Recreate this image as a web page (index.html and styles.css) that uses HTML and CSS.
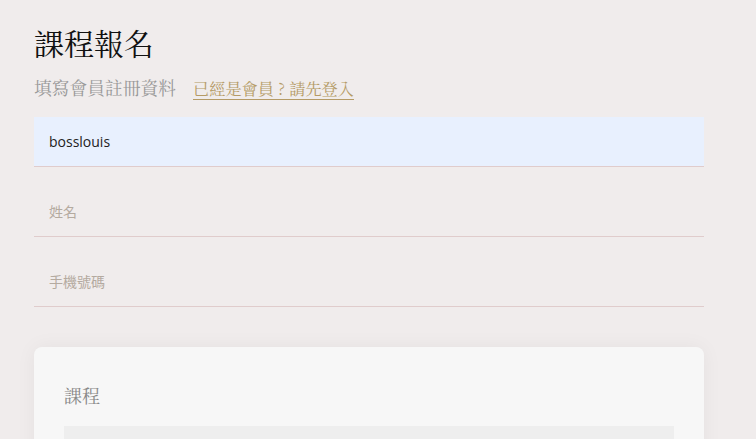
FILE: index.html
```html
<!DOCTYPE html>
<html lang="zh-Hant">
<head>
  <meta charset="UTF-8" />
  <meta name="viewport" content="width=device-width, initial-scale=1" />
  <title>課程報名</title>
  <link rel="stylesheet" href="styles.css">
</head>
<body>

  <main class="signup">
    <h1 class="signup-title">課程報名</h1>
    <p class="signup-sub">
      <span>填寫會員註冊資料</span>
      <a href="#" class="login-link">已經是會員 ? 請先登入</a>
    </p>

    <form class="signup-form">
      <input class="field field-filled" type="text" value="bosslouis">
      <input class="field" type="text" placeholder="姓名">
      <input class="field" type="tel" placeholder="手機號碼">

      <section class="course-card">
        <h2 class="course-label">課程</h2>
        <div class="course-select"></div>
      </section>
    </form>
  </main>

</body>
</html>
```

FILE: styles.css
```css
body {
  margin: 0;
  background: #f0ecec;
  font-family: "Open Sans", "Noto Sans CJK TC", sans-serif;
  color: #333;
}

.signup {
  width: 670px;
  padding: 0 34px;
}

.signup-title {
  margin: 0;
  padding-top: 22px;
  font-family: "Noto Serif CJK TC", "Noto Sans CJK TC", serif;
  font-weight: 400;
  font-size: 30px;
  line-height: 40px;
  color: #111;
}

.signup-sub {
  margin: 12px 0 0;
  display: flex;
  align-items: baseline;
  gap: 17px;
  font-family: "Noto Serif CJK TC", "Noto Sans CJK TC", serif;
  font-size: 17.75px;
  line-height: 28px;
  color: #999;
}

.login-link {
  font-size: 16.2px;
  color: #b59b66;
  text-decoration: underline;
  text-decoration-thickness: 1px;
  text-underline-offset: 4px;
}

.signup-form {
  margin-top: 15px;
  display: flex;
  flex-direction: column;
  gap: 20px;
}

.field {
  display: block;
  box-sizing: border-box;
  width: 100%;
  height: 50px;
  padding: 0 15px;
  border: none;
  border-bottom: 1px solid #e0cccc;
  background: transparent;
  font-family: "Open Sans", "Noto Sans CJK TC", sans-serif;
  font-size: 14px;
  color: #222;
  outline: none;
}

.field::placeholder {
  color: #b4aaa0;
}

.field-filled {
  background: #e8f0fe;
}

.course-card {
  margin-top: 20px;
  padding: 30px 30px 0;
  height: 200px;
  background: #f7f7f7;
  border-radius: 8px;
  box-shadow: 0 0 20px rgba(0, 0, 0, 0.05);
}

.course-label {
  margin: 0;
  padding-top: 5px;
  font-family: "Noto Serif CJK TC", "Noto Sans CJK TC", serif;
  font-weight: 400;
  font-size: 18px;
  line-height: 26px;
  color: #888;
}

.course-select {
  margin-top: 18px;
  height: 50px;
  background: #eeeeee;
}
```
